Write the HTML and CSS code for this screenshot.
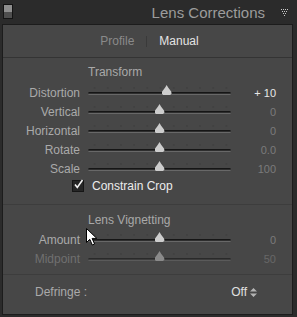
FILE: index.html
```html
<!DOCTYPE html>
<html lang="en">
<head>
  <meta charset="UTF-8" />
  <title>Lens Corrections</title>
  <link rel="stylesheet" href="styles.css">
</head>
<body>

  <div class="header">
    <div class="switch"><span class="switch-on"></span><span class="switch-off"></span></div>
    <div class="title">Lens Corrections</div>
    <svg class="collapse" width="9" height="8" viewBox="0 0 9 8">
      <g fill="#c8c8c8">
        <rect x="0" y="0" width="1" height="1"/><rect x="2" y="0" width="1" height="1"/><rect x="4" y="0" width="1" height="1"/><rect x="6" y="0" width="1" height="1"/>
        <rect x="1" y="2" width="1" height="1"/><rect x="3" y="2" width="1" height="1"/><rect x="5" y="2" width="1" height="1"/>
        <rect x="2" y="4" width="1" height="1"/><rect x="4" y="4" width="1" height="1"/>
        <rect x="3" y="6" width="1" height="1"/>
      </g>
    </svg>
  </div>

  <div class="panel">
    <div class="tabs">
      <span class="tab">Profile</span>
      <span class="tab-sep"></span>
      <span class="tab active">Manual</span>
    </div>

    <div class="section transform">
      <div class="heading">Transform</div>

      <div class="row">
        <span class="label">Distortion</span>
        <div class="track"><span class="knob" style="left: 55%"></span></div>
        <span class="value changed">+ 10</span>
      </div>
      <div class="row">
        <span class="label">Vertical</span>
        <div class="track"><span class="knob" style="left: 50%"></span></div>
        <span class="value">0</span>
      </div>
      <div class="row">
        <span class="label">Horizontal</span>
        <div class="track"><span class="knob" style="left: 50%"></span></div>
        <span class="value">0</span>
      </div>
      <div class="row">
        <span class="label">Rotate</span>
        <div class="track"><span class="knob" style="left: 50%"></span></div>
        <span class="value">0.0</span>
      </div>
      <div class="row">
        <span class="label">Scale</span>
        <div class="track"><span class="knob" style="left: 50%"></span></div>
        <span class="value">100</span>
      </div>

      <label class="check-row">
        <span class="checkbox">
          <svg width="11" height="11" viewBox="0 0 11 11">
            <path d="M2 5.5 L4.3 8.5 L9.5 1" fill="none" stroke="#f2f2f2" stroke-width="1.6"/>
          </svg>
        </span>
        Constrain Crop
      </label>
    </div>

    <div class="section vignetting">
      <div class="heading">Lens Vignetting</div>

      <div class="row">
        <span class="label">Amount</span>
        <div class="track"><span class="knob" style="left: 50%"></span></div>
        <span class="value">0</span>
      </div>
      <div class="row disabled">
        <span class="label">Midpoint</span>
        <div class="track"><span class="knob" style="left: 50%"></span></div>
        <span class="value">50</span>
      </div>
    </div>

    <div class="defringe">
      <span class="defringe-label">Defringe :</span>
      <span class="select">Off
        <svg width="7" height="9" viewBox="0 0 7 9">
          <path d="M3.5 0 L7 3.5 L0 3.5 Z M0 5.5 L7 5.5 L3.5 9 Z" fill="#b4b4b4"/>
        </svg>
      </span>
    </div>
  </div>

  <svg class="cursor" width="12" height="18" viewBox="0 0 12 18">
    <path d="M0.5 0.5 L0.5 14.5 L3.8 11.3 L6.3 17 L8.6 16 L6.1 10.4 L10.8 10.4 Z" fill="#ffffff" stroke="#000000" stroke-width="1"/>
  </svg>

</body>
</html>
```

FILE: styles.css
```css
body {
  margin: 0;
  background-color: #2b2b2b;
  font-family: "Liberation Sans", Arial, sans-serif;
  position: relative;
  width: 297px;
  height: 317px;
  overflow: hidden;
}

/* header */
.header {
  height: 24px;
  display: flex;
  align-items: center;
  padding: 0 7px 0 3px;
}

.switch {
  width: 8px;
  height: 13px;
  border: 1px solid #141414;
  display: flex;
  flex-direction: column;
  align-self: flex-start;
  margin-top: 4px;
}

.switch-on {
  flex: 1;
  background: #8e8e8e;
}

.switch-off {
  flex: 1;
  background: #4e4e4e;
}

.title {
  margin-left: auto;
  color: #9c9c9c;
  font-size: 15px;
  margin-right: 16px;
  margin-top: 1px;
}

.collapse {
  margin-top: 1px;
}

/* panel */
.panel {
  margin-left: 2px;
  width: 289px;
  height: 289px;
  background: #474747;
  border: 1px solid #1c1c1c;
}

.tabs {
  height: 32px;
  border-bottom: 1px solid #343434;
  display: flex;
  align-items: center;
  justify-content: center;
  gap: 12px;
  font-size: 12px;
  padding-left: 4px;
}

.tab {
  color: #8a8a8a;
}

.tab.active {
  color: #e4e4e4;
}

.tab-sep {
  width: 1px;
  height: 11px;
  background: #3a3a3a;
}

.section {
  border-bottom: 1px solid #3d3d3d;
}

.transform {
  padding: 7px 0 10px;
}

.vignetting {
  padding: 8px 0 6px;
}

.heading {
  margin-left: 85px;
  line-height: 15px;
  font-size: 12px;
  color: #a9a9a9;
  margin-bottom: 3px;
}

.vignetting .heading {
  margin-bottom: 2px;
}

.row {
  height: 19px;
  display: flex;
  align-items: center;
}

.label {
  width: 77px;
  text-align: right;
  font-size: 12px;
  color: #aaaaaa;
  margin-right: 8px;
}

.track {
  position: relative;
  width: 143px;
  height: 1px;
  background: #2e2e2e;
  border-top: 1px solid #161616;
  border-bottom: 1px solid #686868;
  border-radius: 2px;
  margin-top: 2px;
}

.track::before {
  content: "";
  position: absolute;
  left: 0;
  right: 0;
  top: -6px;
  height: 2px;
  background-image: radial-gradient(circle, #3f3f3f 0.6px, transparent 0.9px);
  background-size: 13.2px 2px;
}

.knob {
  position: absolute;
  top: -8px;
  width: 10px;
  height: 10px;
  margin-left: -5px;
  background: #cdcdcd;
  clip-path: polygon(50% 0, 65% 25%, 95% 65%, 100% 85%, 85% 100%, 15% 100%, 0 85%, 5% 65%, 35% 25%);
}

.value {
  width: 45px;
  text-align: right;
  font-size: 11px;
  color: #7b7b7b;
}

.value.changed {
  color: #e8e8e8;
}

.row.disabled .label {
  color: #707070;
}

.row.disabled .track {
  border-top-color: #2a2a2a;
  border-bottom-color: #5a5a5a;
  background: #3c3c3c;
}

.row.disabled .knob {
  background: #8a8a8a;
}

.row.disabled .value {
  color: #686868;
}

.check-row {
  height: 16px;
  display: flex;
  align-items: center;
  padding-left: 69px;
  gap: 8px;
  font-size: 12px;
  color: #ececec;
}

.checkbox {
  width: 10px;
  height: 10px;
  background: #262626;
  border: 1px solid #161616;
  position: relative;
}

.checkbox svg {
  position: absolute;
  left: 0;
  top: -2px;
}

.defringe {
  height: 34px;
  display: flex;
  align-items: center;
  font-size: 12px;
  padding-left: 32px;
}

.defringe-label {
  color: #aaaaaa;
}

.select {
  margin-left: auto;
  margin-right: 35px;
  color: #e0e0e0;
  display: flex;
  align-items: center;
  gap: 3px;
}

.cursor {
  position: absolute;
  left: 86px;
  top: 228px;
}
```
